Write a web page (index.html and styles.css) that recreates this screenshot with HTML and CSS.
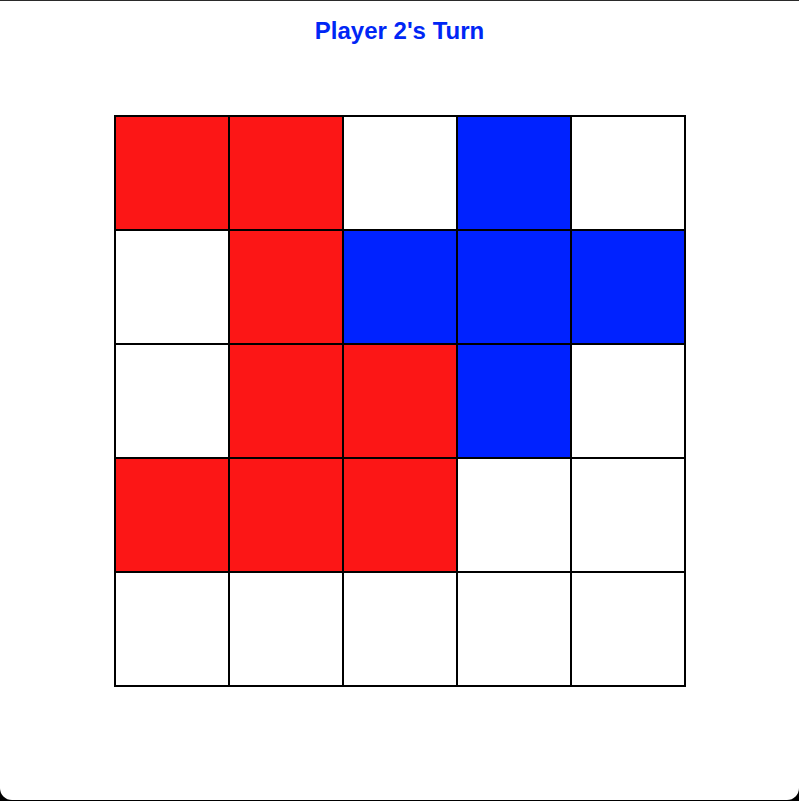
FILE: index.html
```html
<!DOCTYPE html>
<html lang="en">

<head>
    <meta charset="UTF-8">
    <meta name="viewport" content="width=device-width, initial-scale=1.0">
    <title>Game Board</title>
    <link rel="stylesheet" href="styles.css">
</head>

<body>
    <div class="window">
        <h1 class="turn">Player 2's Turn</h1>

        <!-- Tabuleiro 5x5 -->
        <div class="board">
            <div class="cell red"></div>
            <div class="cell red"></div>
            <div class="cell"></div>
            <div class="cell blue"></div>
            <div class="cell"></div>

            <div class="cell"></div>
            <div class="cell red"></div>
            <div class="cell blue"></div>
            <div class="cell blue"></div>
            <div class="cell blue"></div>

            <div class="cell"></div>
            <div class="cell red"></div>
            <div class="cell red"></div>
            <div class="cell blue"></div>
            <div class="cell"></div>

            <div class="cell red"></div>
            <div class="cell red"></div>
            <div class="cell red"></div>
            <div class="cell"></div>
            <div class="cell"></div>

            <div class="cell"></div>
            <div class="cell"></div>
            <div class="cell"></div>
            <div class="cell"></div>
            <div class="cell"></div>
        </div>
    </div>
</body>

</html>
```

FILE: styles.css
```css
html,
body {
    margin: 0;
    height: 100%;
    background-color: #000;
}

body {
    font-family: "Liberation Sans", Arial, sans-serif;
}

.window {
    margin-top: 1px;
    height: 800px;
    background-color: #fff;
    border-top: 1px solid #2a2a2a;
    margin-top: 0;
    box-sizing: border-box;
    border-radius: 0 0 12px 12px;
    display: flex;
    flex-direction: column;
    align-items: center;
}

.turn {
    margin: 16px 0 0;
    font-size: 24px;
    line-height: 28px;
    font-weight: bold;
    color: #0026f5;
}

.board {
    margin-top: 70px;
    display: grid;
    grid-template-columns: repeat(5, 112px);
    grid-template-rows: repeat(5, 112px);
    gap: 2px;
    padding: 2px;
    background-color: #000;
}

.cell {
    background-color: #fff;
}

.red {
    background-color: #fc1616;
}

.blue {
    background-color: #0022ff;
}
```
